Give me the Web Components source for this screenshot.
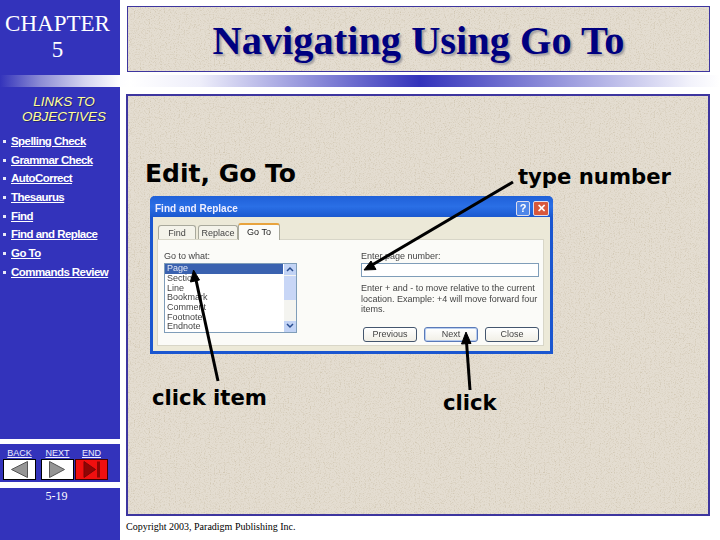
<!DOCTYPE html>
<html>
<head>
<meta charset="utf-8">
<title>Navigating Using Go To</title>
<style>
    html, body { margin: 0; padding: 0; background: #fff; }
</style>
</head>
<body>
<slide-page></slide-page>
<script>
class PaperPanel extends HTMLElement {
    constructor() {
        super();
        this.attachShadow({ mode: 'open' });
    }

    connectedCallback() {
        this.shadowRoot.innerHTML = `
        <style>
            :host {
                display: block;
                position: relative;
                box-sizing: border-box;
                background: #e4ddd1;
                border: var(--edge, 1px) solid #3d359f;
                overflow: hidden;
            }
            svg {
                position: absolute;
                left: 0;
                top: 0;
                width: 100%;
                height: 100%;
            }
            .content { position: relative; height: 100%; }
        </style>
        <svg aria-hidden="true">
            <filter id="grain" x="0" y="0" width="100%" height="100%">
                <feTurbulence type="fractalNoise" baseFrequency="0.8" numOctaves="2" seed="7"/>
                <feColorMatrix type="matrix" values="0 0 0 0 0.60  0 0 0 0 0.53  0 0 0 0 0.40  1.4 1.4 0 0 -1.36"/>
            </filter>
            <rect width="100%" height="100%" filter="url(#grain)"/>
        </svg>
        <div class="content"><slot></slot></div>`;
    }
}

class ChapterBlock extends HTMLElement {
    constructor() {
        super();
        this.attachShadow({ mode: 'open' });
    }

    connectedCallback() {
        this.shadowRoot.innerHTML = `
        <style>
            :host {
                display: block;
                background: #3333bb;
                color: #fff;
                font: 23px/26px "Liberation Serif", serif;
                text-align: center;
                padding: 11px 5px 0 0;
                box-sizing: border-box;
                height: 100%;
            }
        </style>
        CHAPTER<br>5`;
    }
}

class LinkList extends HTMLElement {
    constructor() {
        super();
        this.attachShadow({ mode: 'open' });
    }

    connectedCallback() {
        const items = ['Spelling Check', 'Grammar Check', 'AutoCorrect', 'Thesaurus', 'Find', 'Find and Replace', 'Go To', 'Commands Review'];
        this.shadowRoot.innerHTML = `
        <style>
            :host {
                display: block;
                background: #3333bb;
                height: 352px;
                box-sizing: border-box;
                padding-top: 7px;
                font-family: "Liberation Sans", Arial, sans-serif;
            }
            h2 {
                margin: 0 0 8px 8px;
                font-size: 13.5px;
                line-height: 15px;
                font-weight: normal;
                font-style: italic;
                text-align: center;
                color: #ffff99;
                text-shadow: 1px 1px 0 #22227a;
            }
            ul { margin: 0; padding: 0 0 0 3px; list-style: none; }
            li {
                height: 18.7px;
                line-height: 18.7px;
                display: flex;
                align-items: center;
                gap: 5px;
                color: #fff;
                font-size: 11.5px;
                font-weight: bold;
                white-space: nowrap;
            }
            li::before { content: ""; width: 3px; height: 3px; background: #e8e8f8; }
            a { color: #fff; text-decoration: underline; letter-spacing: -0.55px; }
        </style>
        <h2>LINKS TO<br>OBJECTIVES</h2>
        <ul>${items.map(t => `<li><a>${t}</a></li>`).join('')}</ul>`;
    }
}

class NavButtons extends HTMLElement {
    constructor() {
        super();
        this.attachShadow({ mode: 'open' });
    }

    connectedCallback() {
        this.shadowRoot.innerHTML = `
        <style>
            :host {
                display: grid;
                grid-template-columns: 38px 34px 33px;
                background: #3333bb;
                height: 38px;
                box-sizing: border-box;
                padding: 4px 0 0 3px;
                font: 9px/11px "Liberation Sans", Arial, sans-serif;
                color: #eeeeff;
            }
            .cell { display: flex; flex-direction: column; align-items: center; width: 33px; }
            u { display: block; height: 11px; }
            svg { display: block; width: 33px; height: 21px; }
        </style>
        <div class="cell"><u>BACK</u>
            <svg viewBox="0 0 33 21"><rect x=".5" y=".5" width="32" height="20" fill="#fff" stroke="#000"/><path d="M8.500 10.500 24.500 2.500V18.500Z" fill="#969696" stroke="#555"/></svg>
        </div>
        <div class="cell"><u>NEXT</u>
            <svg viewBox="0 0 33 21"><rect x=".5" y=".5" width="32" height="20" fill="#fff" stroke="#000"/><path d="M8.500 2.500 23.500 10.500 8.500 18.500Z" fill="#969696" stroke="#555"/></svg>
        </div>
        <div class="cell"><u>END</u>
            <svg viewBox="0 0 33 21"><rect x=".5" y=".5" width="32" height="20" fill="#f00f0f" stroke="#400"/><path d="M9 2.500 20.500 10.500 9 18.500Z" fill="#8e0505" stroke="#7a0505"/><rect x="22" y="2.500" width="3" height="16" fill="#8e0505"/></svg>
        </div>`;
    }
}

class SlideSidebar extends HTMLElement {
    constructor() {
        super();
        this.attachShadow({ mode: 'open' });
    }

    connectedCallback() {
        this.shadowRoot.innerHTML = `
        <style>
            :host {
                display: flex;
                flex-direction: column;
                background: #fff;
            }
            .gap { height: 5px; }
            .gap2 { height: 6px; }
            .page-no {
                flex: 1;
                background: #3333bb;
                color: #fff;
                font: 12px/16px "Liberation Serif", serif;
                text-align: center;
                padding-right: 7px;
            }
        </style>
        <link-list></link-list>
        <div class="gap"></div>
        <nav-buttons></nav-buttons>
        <div class="gap2"></div>
        <div class="page-no">5-19</div>`;
    }
}

class FindDialog extends HTMLElement {
    constructor() {
        super();
        this.attachShadow({ mode: 'open' });
    }

    connectedCallback() {
        const rows = ['Page', 'Section', 'Line', 'Bookmark', 'Comment', 'Footnote', 'Endnote'];
        this.shadowRoot.innerHTML = `
        <style>
            :host {
                display: flex;
                flex-direction: column;
                box-sizing: border-box;
                width: 403px;
                height: 158px;
                background: #ece9d8;
                border: 3px solid #1a56d0;
                border-top: 0;
                border-radius: 5px 5px 0 0;
                font: 9px/10.5px "Liberation Sans", Arial, sans-serif;
                color: #444;
                filter: blur(0.5px);
            }
            .title {
                height: 21px;
                margin: 0 -3px;
                border-radius: 5px 5px 0 0;
                background: linear-gradient(#1f60d8, #2a6fe6 50%, #1a58cf);
                display: flex;
                align-items: center;
                box-sizing: border-box;
                color: #eef;
                font-size: 10px;
                font-weight: bold;
                padding: 4px 4px 0 5px;
                gap: 3px;
            }
            .title span { flex: 1; padding-top: 1px; }
            .tb {
                width: 14px;
                height: 15px;
                border: 1px solid #dde;
                border-radius: 2px;
                box-sizing: border-box;
                text-align: center;
                line-height: 13px;
                font-size: 11px;
                background: #4f86e8;
                color: #fff;
            }
            .tb.x { width: 16px; background: #d8583c; }
            .body { flex: 1; display: flex; flex-direction: column; padding: 6px 6px 5px 4px; }
            .tabs { display: flex; height: 16px; padding-left: 1px; gap: 2px; }
            .tab {
                width: 38px;
                margin-top: 2px;
                border: 1px solid #a9a99c;
                border-bottom: 0;
                border-radius: 3px 3px 0 0;
                background: #f4f3ea;
                box-sizing: border-box;
                text-align: center;
                line-height: 14px;
            }
            .tab.wide { width: 40px; }
            .tab.on {
                width: 42px;
                margin: 0 0 0 -2px;
                height: 17px;
                border-top: 2px solid #e8a33d;
                background: #fbfbf8;
                position: relative;
                color: #222;
            }
            .pane {
                flex: 1;
                display: grid;
                grid-template-columns: 133px 178px;
                column-gap: 64px;
                padding: 11px 0 0 6px;
                background: #fbfbf8;
                border: 1px solid #d8d6c8;
                box-sizing: border-box;
            }
            .lbl { height: 12px; line-height: 10px; }
            .list {
                position: relative;
                height: 70px;
                border: 1px solid #7f9db9;
                box-sizing: border-box;
                background: #fff;
                overflow: hidden;
                padding-right: 13px;
            }
            .row { height: 9.7px; line-height: 9.7px; padding-left: 2px; }
            .row.sel { height: 10px; background: #3a62b0; color: #e4e8f4; }
            .sb {
                position: absolute;
                right: 0;
                top: 0;
                bottom: 0;
                width: 12px;
                background: #f4f4f0;
                display: flex;
                flex-direction: column;
                justify-content: space-between;
            }
            .sb i { display: block; height: 11px; background: #c2d3f5; text-align: center; }
            .sb svg { display: block; margin: 2px auto 0; }
            .sb .thumb { position: absolute; left: 0; right: 0; top: 12px; height: 24px; background: #c8d6f6; }
            .input { height: 14px; border: 1px solid #7f9db9; background: #fff; box-sizing: border-box; }
            p { margin: 6px 0 0; width: 178px; }
            .btns {
                display: grid;
                grid-template-columns: 54px 54px 54px;
                column-gap: 7px;
                margin: 12px 0 0 2px;
            }
            .btn {
                height: 15px;
                border: 1px solid #44566e;
                border-radius: 3px;
                background: linear-gradient(#fff, #f1efe6);
                box-sizing: border-box;
                text-align: center;
                line-height: 13px;
            }
            .btn.def { border-color: #5a7ab8; box-shadow: inset 0 0 0 1px #b8cdf0; }
        </style>
        <div class="title"><span>Find and Replace</span><div class="tb">?</div><div class="tb x">✕</div></div>
        <div class="body">
            <div class="tabs">
                <div class="tab">Find</div>
                <div class="tab wide">Replace</div>
                <div class="tab on">Go To</div>
            </div>
            <div class="pane">
                <div>
                    <div class="lbl">Go to what:</div>
                    <div class="list">
                        ${rows.map((r, i) => `<div class="row${i ? '' : ' sel'}">${r}</div>`).join('')}
                        <div class="sb">
                            <i><svg width="8" height="6" viewBox="0 0 8 6"><path d="M1 5 4 2l3 3" fill="none" stroke="#2a4d8f" stroke-width="1.500"/></svg></i>
                            <div class="thumb"></div>
                            <i><svg width="8" height="6" viewBox="0 0 8 6"><path d="M1 1 4 4l3-3" fill="none" stroke="#2a4d8f" stroke-width="1.500"/></svg></i>
                        </div>
                    </div>
                </div>
                <div>
                    <div class="lbl">Enter page number:</div>
                    <div class="input"></div>
                    <p>Enter + and - to move relative to the current location. Example: +4 will move forward four items.</p>
                    <div class="btns">
                        <div class="btn">Previous</div>
                        <div class="btn def">Next</div>
                        <div class="btn">Close</div>
                    </div>
                </div>
            </div>
        </div>`;
    }
}

class SlideBody extends HTMLElement {
    constructor() {
        super();
        this.attachShadow({ mode: 'open' });
    }

    connectedCallback() {
        this.shadowRoot.innerHTML = `
        <style>
            :host {
                display: block;
                position: relative;
                height: 100%;
                box-sizing: border-box;
                padding: 63px 0 0 17px;
                font: bold 25px/30px "DejaVu Sans", Verdana, sans-serif;
                color: #000;
            }
            .row { display: flex; height: 30px; }
            .row b { font-weight: inherit; }
            .one { justify-content: space-between; align-items: flex-start; padding-right: 37px; margin-bottom: 7px; }
            .one b:last-child { padding-top: 3px; font-size: 21.2px; }
            find-dialog { margin-left: 5px; }
            .two { margin-top: 29px; padding-left: 7px; font-size: 21.2px; }
            .two b:last-child { margin-left: 176px; padding-top: 5px; }
            svg { position: absolute; left: 0; top: 0; width: 100%; height: 100%; pointer-events: none; }
        </style>
        <div class="row one"><b>Edit, Go To</b><b>type number</b></div>
        <find-dialog></find-dialog>
        <div class="row two"><b>click item</b><b>click</b></div>
        <svg aria-hidden="true">
            <g transform="translate(-128 -96)" fill="#000" stroke="#000" stroke-width="3" stroke-linecap="butt">
                <line x1="513" y1="182" x2="372" y2="265"/>
                <path d="M364 270 376 269.500 371 261Z" stroke-width="1"/>
                <line x1="218" y1="381" x2="196" y2="280"/>
                <path d="M193.500 270 190.500 282 199.500 280Z" stroke-width="1"/>
                <line x1="470" y1="390" x2="466.500" y2="342"/>
                <path d="M466 332 461.500 344 471 343.500Z" stroke-width="1"/>
            </g>
        </svg>`;
    }
}

class SlidePage extends HTMLElement {
    constructor() {
        super();
        this.attachShadow({ mode: 'open' });
    }

    connectedCallback() {
        this.shadowRoot.innerHTML = `
        <style>
            :host {
                display: grid;
                grid-template-columns: 120px 600px;
                grid-template-rows: 75px 12px 453px;
                width: 720px;
                height: 540px;
                overflow: hidden;
                background: #fff;
            }
            .head { padding: 6px 10px 3px 7px; box-sizing: border-box; }
            .head paper-panel { height: 66px; }
            h1 {
                margin: 0;
                height: 64px;
                text-align: center;
                color: #000080;
                font: bold 40.4px/67px "Liberation Serif", serif;
                text-shadow: 2px 2px 2px #a09ca0;
            }
            .bar {
                grid-column: 1 / 3;
                background:
                    linear-gradient(90deg, #3333bb 0, #8c8cd4 40px, #d4d4f0 85px, #fdfdff 120px, #fff 130px, #eeeefa 200px, #3333bb 420px, #f2f2fb 690px, #fff 720px);
            }
            .main { padding: 7px 10px 0 6px; box-sizing: border-box; display: flex; flex-direction: column; }
            .main paper-panel { --edge: 2px; height: 422px; }
            .copy {
                margin-top: 4px;
                font: 10px/14px "Liberation Serif", serif;
                color: #000;
            }
        </style>
        <chapter-block></chapter-block>
        <div class="head"><paper-panel><h1>Navigating Using Go To</h1></paper-panel></div>
        <div class="bar"></div>
        <slide-sidebar></slide-sidebar>
        <div class="main">
            <paper-panel><slide-body></slide-body></paper-panel>
            <div class="copy">Copyright 2003, Paradigm Publishing Inc.</div>
        </div>`;
    }
}

customElements.define('paper-panel', PaperPanel);
customElements.define('chapter-block', ChapterBlock);
customElements.define('link-list', LinkList);
customElements.define('nav-buttons', NavButtons);
customElements.define('slide-sidebar', SlideSidebar);
customElements.define('find-dialog', FindDialog);
customElements.define('slide-body', SlideBody);
customElements.define('slide-page', SlidePage);
</script>
</body>
</html>
